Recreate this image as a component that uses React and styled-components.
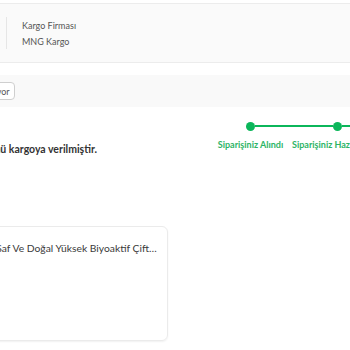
import React from 'react';
import styled, { createGlobalStyle } from 'styled-components';

const GlobalStyle = createGlobalStyle`
  html, body {
    margin: 0;
    padding: 0;
    background: #ffffff;
    overflow: hidden;
  }
  body {
    font-family: Lato, "Noto Sans", sans-serif;
    color: #333;
  }
`;

const steps = [
  { label: 'Siparişiniz Alındı', done: true },
  { label: 'Siparişiniz Hazırlanıyor', done: true },
  { label: 'Kargoya Verildi', done: true },
];

const App = () => {
  return (
    <Page>
      <GlobalStyle />
      <Shifted>
        <CargoBox>
          <CargoLogo />
          <Divider />
          <CargoInfo>
            <Caption>Kargo Firması</Caption>
            <Caption>MNG Kargo</Caption>
          </CargoInfo>
        </CargoBox>

        <ActionBand>
          <Pill>Kargoda ilerliyor</Pill>
        </ActionBand>

        <StatusRow>
          <StatusText>Siparişinizdeki ürünü kargoya verilmiştir.</StatusText>
          <Stepper>
            {steps.map((step, i) => (
              <Step key={step.label}>
                <Track>
                  <Line $on={i > 0} />
                  <Dot />
                  <Line $on={i < steps.length - 1} />
                </Track>
                <StepLabel>{step.label}</StepLabel>
              </Step>
            ))}
          </Stepper>
        </StatusRow>

        <ProductCard>
          <ProductThumb />
          <ProductName>
            Organik Soğuk Sıkım %100 Saf Ve Doğal Yüksek Biyoaktif Çiftlik Zeytinyağı
          </ProductName>
        </ProductCard>
      </Shifted>
    </Page>
  );
};

export default App;

//styling
const Page = styled.div`
  width: 350px;
  height: 350px;
  overflow: hidden;
`;

const Shifted = styled.div`
  margin-left: -100px;
  width: 600px;
  padding-top: 3px;
`;

const CargoBox = styled.div`
  display: flex;
  align-items: center;
  height: 58px;
  background: #fafafa;
  border-top: 1px solid #ececec;
  border-bottom: 1px solid #ececec;
`;

const CargoLogo = styled.div`
  width: 60px;
  height: 30px;
  margin-left: 40px;
`;

const Divider = styled.div`
  width: 1px;
  height: 32px;
  background: #e6e6e6;
  margin-left: 6px;
`;

const CargoInfo = styled.div`
  display: flex;
  flex-direction: column;
  gap: 5px;
  margin-left: 15px;
  margin-top: 1px;
`;

const Caption = styled.span`
  font-size: 9px;
  color: #555;
  line-height: 11px;
`;

const ActionBand = styled.div`
  display: flex;
  align-items: center;
  height: 32px;
  margin-top: 12px;
  background: #f9f9f9;
  padding-left: 40px;
`;

const Pill = styled.span`
  display: inline-flex;
  align-items: center;
  height: 16px;
  padding: 0 4px;
  border: 1px solid #cfcfcf;
  border-radius: 4px;
  background: #fff;
  font-size: 9px;
  color: #555;
  white-space: nowrap;
`;

const StatusRow = styled.div`
  display: flex;
  align-items: flex-start;
  margin-top: 14px;
  height: 45px;
`;

const StatusText = styled.div`
  font-size: 10.5px;
  font-weight: 700;
  color: #333;
  white-space: nowrap;
  margin-top: 22px;
  width: 307px;
  box-sizing: border-box;
  display: flex;
  justify-content: flex-end;
  padding-right: 110px;
`;

const Stepper = styled.div`
  display: flex;
`;

const Step = styled.div`
  width: 87px;
  display: flex;
  flex-direction: column;
  align-items: center;
`;

const Track = styled.div`
  display: flex;
  align-items: center;
  width: 100%;
  height: 10px;
`;

const Line = styled.div`
  flex: 1;
  height: 1.5px;
  background: ${props => (props.$on ? '#0bb65a' : 'transparent')};
`;

const Dot = styled.div`
  width: 9px;
  height: 9px;
  border-radius: 50%;
  background: #0bb65a;
  flex-shrink: 0;
`;

const StepLabel = styled.span`
  margin-top: 8px;
  font-size: 9px;
  font-weight: 700;
  color: #2db466;
  white-space: nowrap;
`;

const ProductCard = styled.div`
  display: flex;
  align-items: flex-start;
  width: 268px;
  height: 115px;
  margin-top: 60px;
  border: 1px solid #ebebeb;
  border-radius: 6px;
  box-shadow: 0 1px 2px rgba(0, 0, 0, 0.06);
  box-sizing: border-box;
  padding: 15px 8px 15px 10px;
  gap: 10px;
`;

const ProductThumb = styled.div`
  width: 0;
  flex-shrink: 0;
`;

const ProductName = styled.div`
  font-size: 10.3px;
  color: #3a3a3a;
  white-space: nowrap;
  overflow: hidden;
  text-overflow: ellipsis;
  margin-left: -49px;
`;
